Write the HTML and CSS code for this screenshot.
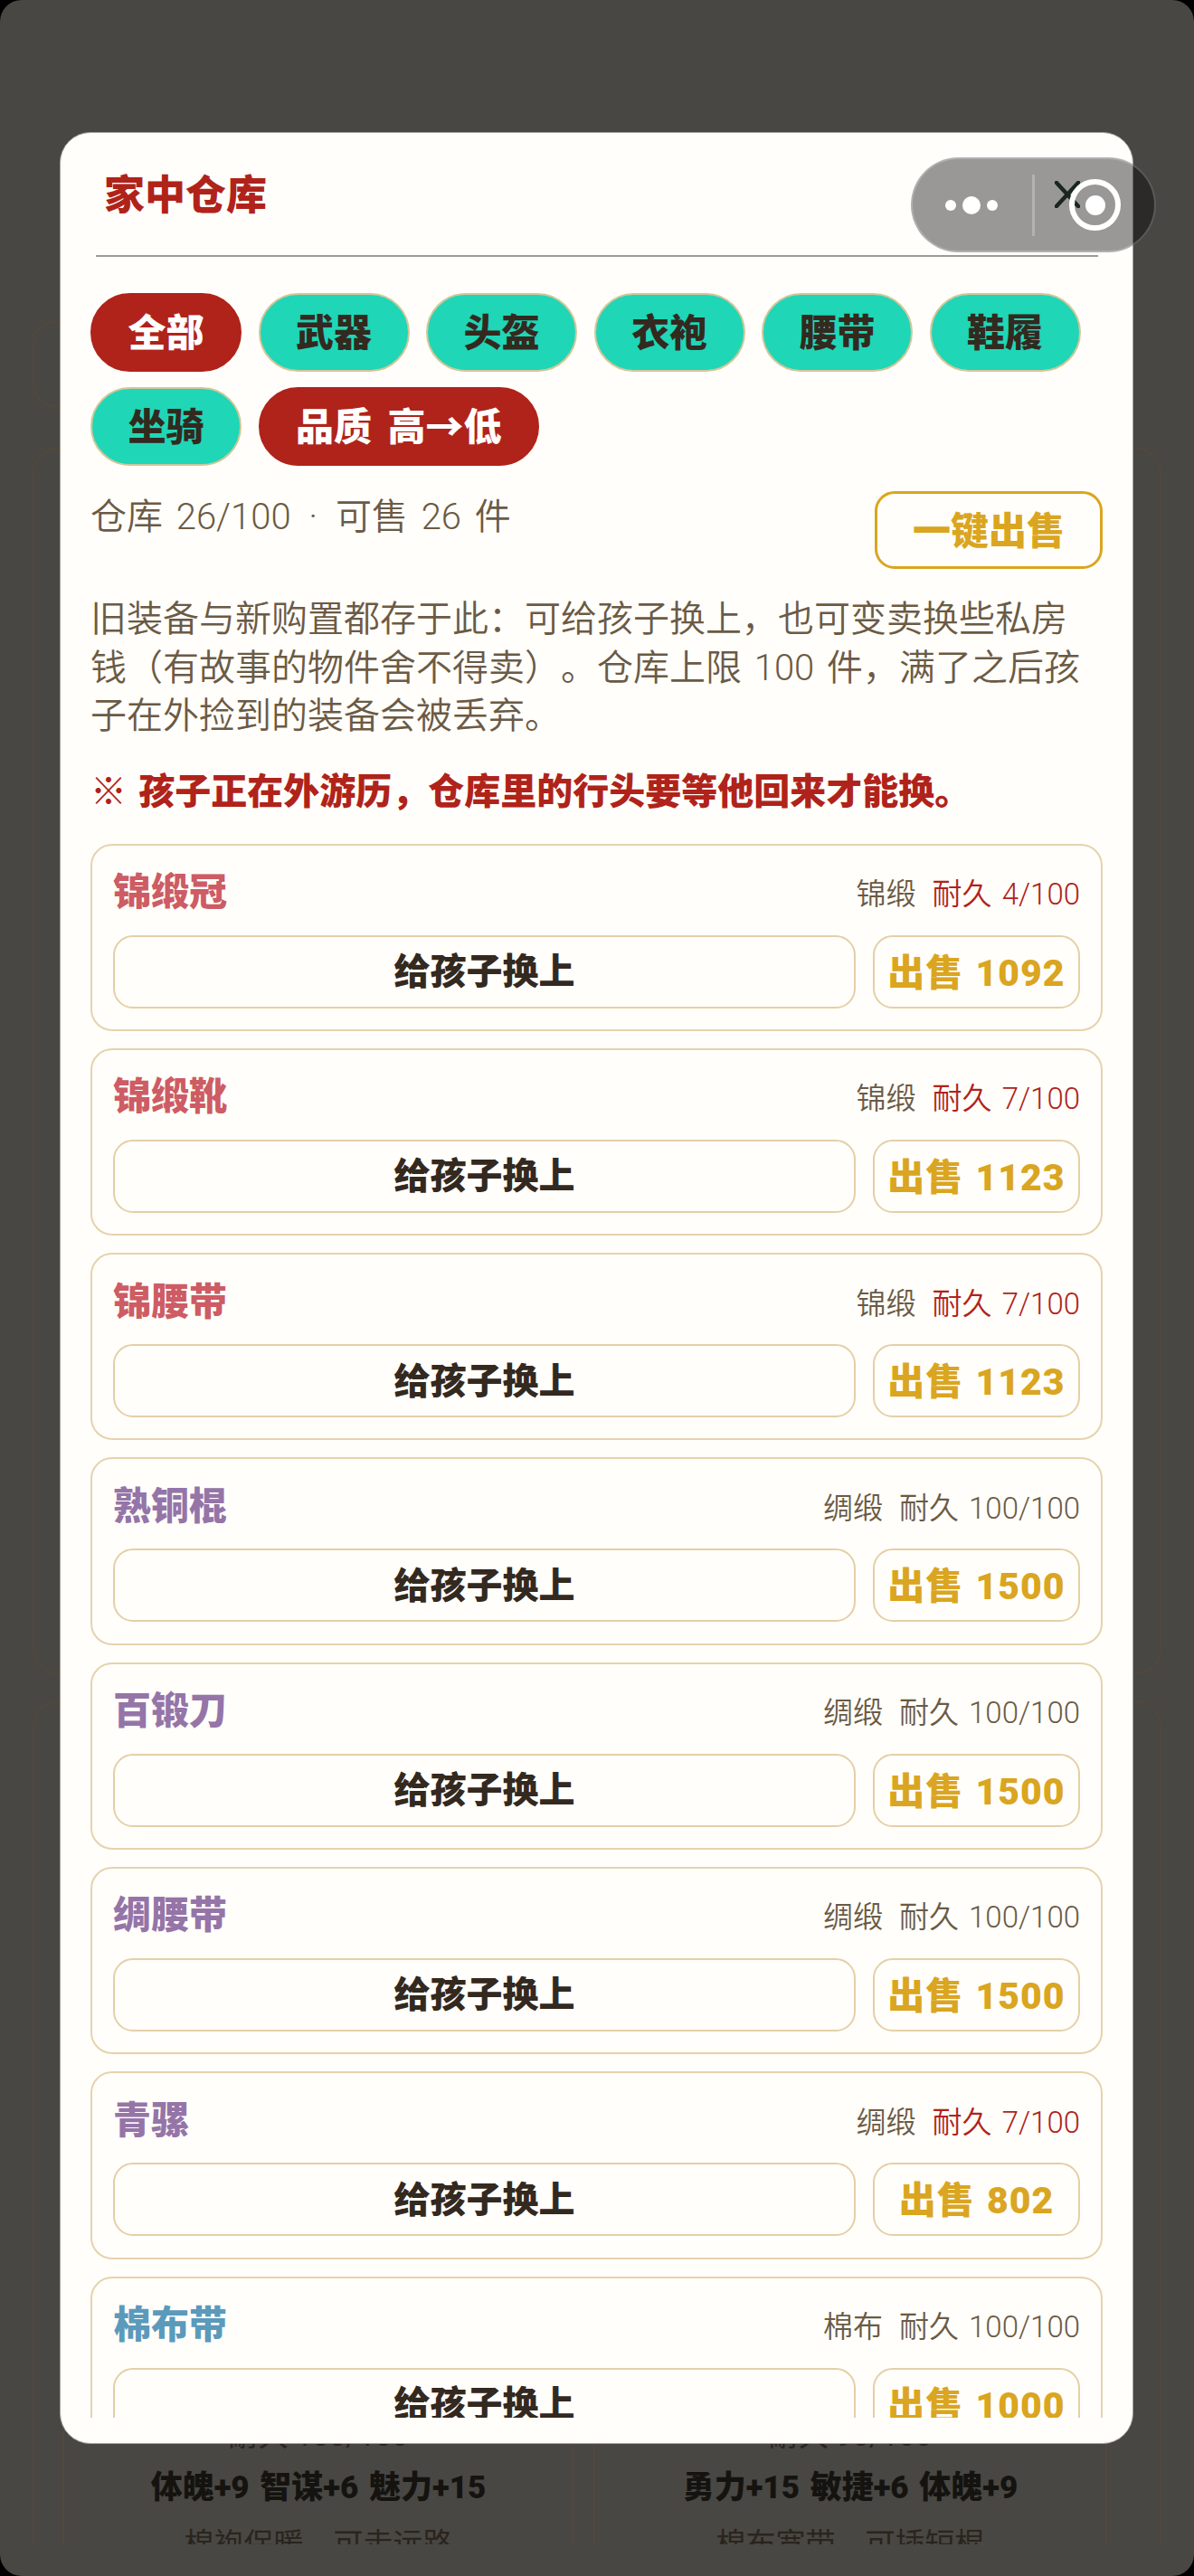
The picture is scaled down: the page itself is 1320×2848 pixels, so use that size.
FILE: index.html
```html
<!DOCTYPE html>
<html lang="zh-CN">
<head>
<meta charset="utf-8">
<title>家中仓库</title>
<link rel="stylesheet" href="styles.css">
</head>
<body>
<div class="screen">
  <div class="backdrop">
    <div class="bg-stub"></div>
    <div class="bg-panel bg-panel-tall"></div>
    <div class="bg-panel bg-panel-low">
      <div class="bg-grid">
        <div class="bg-cell">
          <p class="bg-meta">耐久 100/100</p>
          <p class="bg-stats">体魄+9 智谋+6 魅力+15</p>
          <p class="bg-desc">棉袍保暖，可走远路</p>
        </div>
        <div class="bg-cell">
          <p class="bg-meta">耐久 90/100</p>
          <p class="bg-stats">勇力+15 敏捷+6 体魄+9</p>
          <p class="bg-desc">棉布宽带，可插短棍</p>
        </div>
      </div>
    </div>
  </div>

  <section class="modal">
    <header class="modal-head">
      <h1 class="modal-title">家中仓库</h1>
      <svg class="close-icon" viewBox="0 0 28 30" aria-label="关闭"><path d="M2 2 L26 28 M26 2 L2 28"/></svg>
    </header>
    <div class="modal-body">
      <div class="filters">
        <span class="pill pill-on">全部</span>
        <span class="pill">武器</span>
        <span class="pill">头盔</span>
        <span class="pill">衣袍</span>
        <span class="pill">腰带</span>
        <span class="pill">鞋履</span>
        <span class="pill">坐骑</span>
        <span class="pill pill-on">品质 高→低</span>
      </div>
      <div class="status">
        <span class="status-text">仓库 26/100 <span class="sep">·</span> 可售 26 件</span>
        <button class="sell-all">一键出售</button>
      </div>
      <p class="intro">旧装备与新购置都存于此：可给孩子换上，也可变卖换些私房钱（有故事的物件舍不得卖）。仓库上限 100 件，满了之后孩子在外捡到的装备会被丢弃。</p>
      <p class="warn">※ 孩子正在外游历，仓库里的行头要等他回来才能换。</p>

      <article class="item">
        <div class="item-top"><span class="item-name q-red">锦缎冠</span><span class="item-meta"><span>锦缎</span><span class="low">耐久 4/100</span></span></div>
        <div class="item-actions"><button class="btn-swap">给孩子换上</button><button class="btn-sell">出售 1092</button></div>
      </article>
      <article class="item">
        <div class="item-top"><span class="item-name q-red">锦缎靴</span><span class="item-meta"><span>锦缎</span><span class="low">耐久 7/100</span></span></div>
        <div class="item-actions"><button class="btn-swap">给孩子换上</button><button class="btn-sell">出售 1123</button></div>
      </article>
      <article class="item">
        <div class="item-top"><span class="item-name q-red">锦腰带</span><span class="item-meta"><span>锦缎</span><span class="low">耐久 7/100</span></span></div>
        <div class="item-actions"><button class="btn-swap">给孩子换上</button><button class="btn-sell">出售 1123</button></div>
      </article>
      <article class="item">
        <div class="item-top"><span class="item-name q-purple">熟铜棍</span><span class="item-meta"><span>绸缎</span><span>耐久 100/100</span></span></div>
        <div class="item-actions"><button class="btn-swap">给孩子换上</button><button class="btn-sell">出售 1500</button></div>
      </article>
      <article class="item">
        <div class="item-top"><span class="item-name q-purple">百锻刀</span><span class="item-meta"><span>绸缎</span><span>耐久 100/100</span></span></div>
        <div class="item-actions"><button class="btn-swap">给孩子换上</button><button class="btn-sell">出售 1500</button></div>
      </article>
      <article class="item">
        <div class="item-top"><span class="item-name q-purple">绸腰带</span><span class="item-meta"><span>绸缎</span><span>耐久 100/100</span></span></div>
        <div class="item-actions"><button class="btn-swap">给孩子换上</button><button class="btn-sell">出售 1500</button></div>
      </article>
      <article class="item">
        <div class="item-top"><span class="item-name q-purple">青骡</span><span class="item-meta"><span>绸缎</span><span class="low">耐久 7/100</span></span></div>
        <div class="item-actions"><button class="btn-swap">给孩子换上</button><button class="btn-sell">出售 802</button></div>
      </article>
      <article class="item">
        <div class="item-top"><span class="item-name q-blue">棉布带</span><span class="item-meta"><span>棉布</span><span>耐久 100/100</span></span></div>
        <div class="item-actions"><button class="btn-swap">给孩子换上</button><button class="btn-sell">出售 1000</button></div>
      </article>
    </div>
  </section>

  <div class="capsule">
    <span class="capsule-dots"><i class="dot"></i><i class="dot dot-big"></i><i class="dot"></i></span>
    <span class="capsule-line"></span>
    <span class="capsule-ring"><i class="ring-core"></i></span>
  </div>
</div>
</body>
</html>
```
FILE: styles.css
```css
* { box-sizing: border-box; }
html, body { margin: 0; padding: 0; background: #000; }
body { width: 1320px; height: 2848px; overflow: hidden; font-family: Roboto, "Noto Sans CJK SC", "Noto Sans", sans-serif; text-spacing-trim: space-all; }
p, h1 { margin: 0; }
button { font-family: inherit; background: none; padding: 0; cursor: pointer; }

.screen { position: relative; width: 1320px; height: 2848px; background: #484743; border-radius: 24px; overflow: hidden; }

.backdrop { height: 2813px; padding: 355px 36px 0; overflow: hidden; }
.bg-stub { height: 95px; width: 400px; border: 2px solid #52483b; border-radius: 24px; margin-bottom: 45px; }
.bg-panel { border: 2px solid #52483b; border-radius: 28px; padding: 0 0 0 31px; }
.bg-panel-tall { height: 1356px; margin-bottom: 29px; }
.bg-panel-low { height: 1000px; }
.bg-grid { display: grid; grid-template-columns: 566px 568px; gap: 21px; padding-top: 760px; }
.bg-cell { height: 300px; border: 2px solid #52483b; border-top: 0; text-align: center; padding-top: 28px; }
.bg-meta { font-size: 33px; line-height: 46px; color: #2a241d; margin-bottom: 12px; }
.bg-stats { font-size: 35px; font-weight: 900; color: #151310; line-height: 46px; word-spacing: 3px; }
.bg-desc { font-size: 33px; color: #2a241d; line-height: 46px; margin-top: 16px; }

.modal { position: absolute; left: 66px; top: 146px; width: 1187px; height: 2556px; background: #fffefa; border-radius: 34px; border: 1px solid #a5a49f; display: flex; flex-direction: column; padding-bottom: 28px; overflow: hidden; }
.modal-head { position: relative; margin: 0 38px 0 39px; height: 137px; border-bottom: 2px solid #9a9a96; flex: none; padding: 38px 0 0 9px; }
.modal-title { font-size: 45px; font-weight: 900; color: #b0231a; line-height: 64px; }
.close-icon { position: absolute; right: 20px; top: 53px; width: 28px; height: 30px; fill: none; stroke: #2c4037; stroke-width: 4.5; stroke-linecap: round; }

.modal-body { flex: 1; min-height: 0; overflow: hidden; padding: 40px 33px 0; }

.filters { display: flex; flex-wrap: wrap; gap: 17px 18.3px; }
.pill { height: 87px; padding: 0 39.6px 6px; border-radius: 44px; display: flex; align-items: center; background: #1fd6b6; border: 2px solid #d2c79a; color: #33291f; font-size: 42px; font-weight: 900; white-space: nowrap; word-spacing: 7px; }
.pill-on { background: #b0231a; border-color: #b0231a; color: #fff; }

.status { display: flex; justify-content: space-between; align-items: flex-start; margin-top: 28px; }
.status-text { font-size: 40px; line-height: 58px; color: #6b5a45; font-weight: 350; word-spacing: 5px; }
.sep { margin: 0 5px; }
.sell-all { width: 252px; height: 86px; padding-bottom: 6px; border: 3px solid #daa520; border-radius: 22px; color: #daa520; font-size: 42px; font-weight: 900; }

.intro { margin-top: 29px; font-size: 40px; line-height: 53.5px; color: #6b5a45; font-weight: 350; word-spacing: 4px; }
.warn { margin-top: 25px; font-family: "Noto Sans CJK SC", sans-serif; font-size: 40px; line-height: 56px; font-weight: 900; color: #b0231a; word-spacing: 4px; }

.item { height: 207.3px; margin-bottom: 19px; border: 2px solid #e6d2ae; border-radius: 24px; padding: 20px 23px 0; }
.warn + .item { margin-top: 33px; }
.item-top { display: flex; justify-content: space-between; align-items: center; height: 62px; }
.item-name { font-size: 42px; font-weight: 900; line-height: 60px; margin-top: 3px; }
.q-red { color: #cd5c64; }
.q-purple { color: #9575a8; }
.q-blue { color: #5b9abb; }
.item-meta { display: flex; gap: 18px; margin-top: 7px; font-size: 33px; line-height: 46px; color: #6b5a45; font-weight: 350; word-spacing: 3px; }
.low { color: #b0231a; }
.item-actions { display: flex; gap: 19px; margin-top: 17px; }
.btn-swap { flex: 1; height: 81px; padding-bottom: 6px; border: 2.5px solid #e5cfa8; border-radius: 22px; color: #33291f; font-size: 40px; font-weight: 900; }
.btn-sell { flex: none; width: 229px; height: 81px; padding-bottom: 5px; border: 2.5px solid #e5cfa8; border-radius: 22px; color: #daa520; font-size: 41px; letter-spacing: 1px; font-weight: 900; white-space: nowrap; word-spacing: 2px; }

.capsule { position: absolute; left: 1007px; top: 174px; width: 271px; height: 105px; border-radius: 53px; background: rgba(0,0,0,.4); border: 2px solid rgba(255,255,255,.22); }
.capsule-dots { position: absolute; left: 36px; top: 0; height: 101px; display: flex; align-items: center; gap: 7px; }
.dot { display: block; width: 12px; height: 12px; border-radius: 50%; background: #fff; }
.dot-big { width: 20px; height: 20px; }
.capsule-line { position: absolute; left: 132px; top: 17px; width: 3px; height: 68px; background: rgba(255,255,255,.25); }
.capsule-ring { position: absolute; left: 173px; top: 22px; width: 57px; height: 57px; border-radius: 50%; border: 6px solid #fff; display: flex; align-items: center; justify-content: center; }
.ring-core { display: block; width: 22px; height: 22px; border-radius: 50%; background: #fff; }
```
